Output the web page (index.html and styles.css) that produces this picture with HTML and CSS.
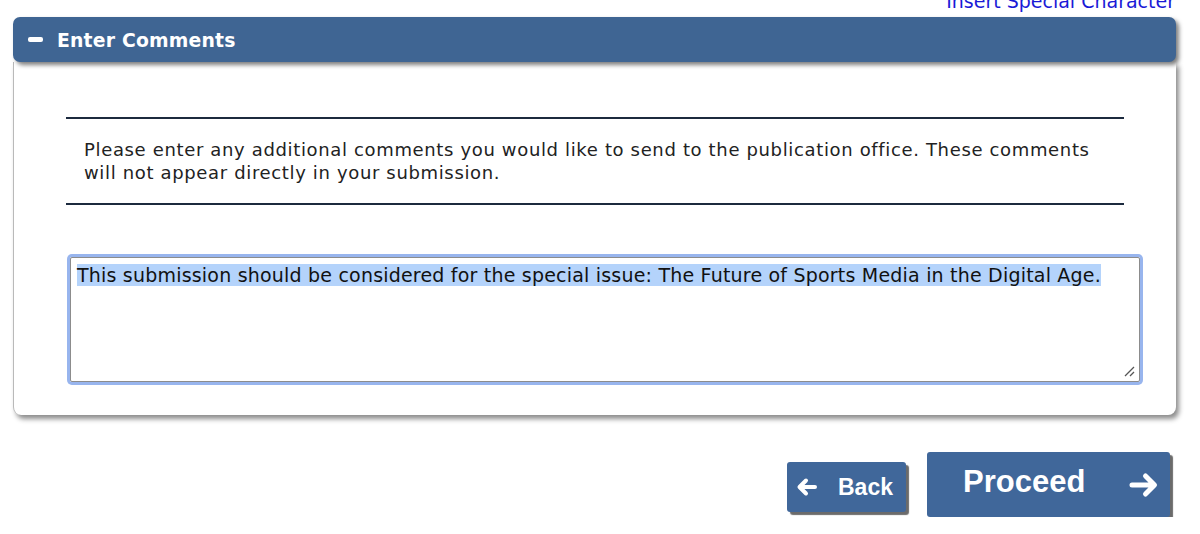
FILE: index.html
```html
<!DOCTYPE html>
<html>
<head>
<meta charset="utf-8">
<link rel="stylesheet" href="styles.css">
</head>
<body>
<div class="top-link"><a href="#">Insert Special Character</a></div>
<div class="panel">
  <div class="panel-head">
    <span class="minus"></span>
    <span class="panel-title">Enter Comments</span>
  </div>
  <div class="panel-body">
    <div class="rule"></div>
    <p class="intro">Please enter any additional comments you would like to send to the publication office. These comments will not appear directly in your submission.</p>
    <div class="rule"></div>
    <div class="textbox">
      <span class="sel">This submission should be considered for the special issue: The Future of Sports Media in the Digital Age.</span>
      <svg class="grip" width="12" height="12" viewBox="0 0 12 12"><path d="M2 11 L11 2 M7 11 L11 7" stroke="#555" stroke-width="1.3" fill="none"/></svg>
    </div>
  </div>
</div>
<div class="actions">
  <a class="btn btn-back" href="#">
    <svg width="22" height="22" viewBox="0 0 22 22"><path d="M19 11 H4 M10 4.5 L3.5 11 L10 17.5" stroke="#fff" stroke-width="4" stroke-linecap="round" stroke-linejoin="round" fill="none"/></svg>
    <span>Back</span>
  </a>
  <a class="btn btn-proceed" href="#">
    <span>Proceed</span>
    <svg width="30" height="30" viewBox="0 0 30 30"><path d="M3 15 H25 M16.5 6 L25.5 15 L16.5 24" stroke="#fff" stroke-width="5" stroke-linecap="round" stroke-linejoin="round" fill="none"/></svg>
  </a>
</div>
</body>
</html>
```
FILE: styles.css
```css
html, body {
  margin: 0;
  padding: 0;
  background: #fff;
}
body {
  font-family: "DejaVu Sans", Verdana, sans-serif;
  color: #1e1e1e;
  overflow: hidden;
}
.top-link {
  margin-top: -10px;
  height: 27px;
  text-align: right;
  padding-right: 25px;
  font-size: 19px;
  line-height: 22px;
}
.top-link a {
  color: #1a1ad6;
  text-decoration: none;
}
.panel {
  margin: 0 24px 0 13px;
}
.panel-head {
  height: 45px;
  background: #3f6593;
  border-radius: 7px;
  box-shadow: 3px 3px 4px rgba(0,0,0,0.5);
  display: flex;
  align-items: center;
  padding-left: 15px;
  position: relative;
  z-index: 1;
}
.minus {
  width: 15px;
  height: 5px;
  background: #fff;
  border-radius: 2px;
  margin-right: 14px;
}
.panel-title {
  color: #fff;
  font-weight: bold;
  font-size: 18.8px;
  letter-spacing: 0.2px;
  margin-top: 1px;
}
.panel-body {
  background: #fff;
  border-left: 1px solid #b9b9b9;
  border-radius: 0 0 8px 8px;
  box-shadow: 3px 4px 5px rgba(0,0,0,0.45);
  padding: 55px 52px 28px 52px;
  height: 270px;
}
.rule {
  height: 2px;
  background: #1c2a3e;
}
.intro {
  margin: 0;
  padding: 19px 32px 19px 18px;
  font-size: 18px;
  letter-spacing: 0.65px;
  line-height: 23px;
  color: #222;
}
.textbox {
  box-sizing: border-box;
  margin-top: 52px;
  margin-left: 4px;
  margin-right: -16px;
  height: 125px;
  border: 1px solid #8c8c8c;
  border-radius: 2px;
  box-shadow: 0 0 0 3px #98b5ee;
  padding: 6px 6px 5px;
  font-size: 19px;
  letter-spacing: 0.2px;
  line-height: 23px;
  position: relative;
  color: #111;
}
.sel {
  background: #b4d3fb;
}
.grip {
  position: absolute;
  right: 4px;
  bottom: 4px;
}
.actions {
  display: flex;
  justify-content: flex-end;
  align-items: center;
  gap: 21px;
  margin-top: 42px;
  padding-right: 30px;
}
.btn {
  display: flex;
  align-items: center;
  background: #40679a;
  color: #fff;
  text-decoration: none;
  font-family: "Liberation Sans", Arial, sans-serif;
  font-weight: bold;
  border-radius: 3px;
  box-shadow: 3px 3px 1px #6b6b6b;
}
.btn-back {
  width: 119px;
  height: 50px;
  box-sizing: border-box;
  padding-left: 9px;
  font-size: 23px;
}
.btn-back span {
  margin-left: 20px;
}
.btn-proceed {
  width: 243px;
  height: 65px;
  box-sizing: border-box;
  padding: 0 11px 0 36px;
  justify-content: space-between;
  font-size: 31px;
  margin-top: -5px;
}
.btn-proceed span {
  margin-top: -6px;
}
```
